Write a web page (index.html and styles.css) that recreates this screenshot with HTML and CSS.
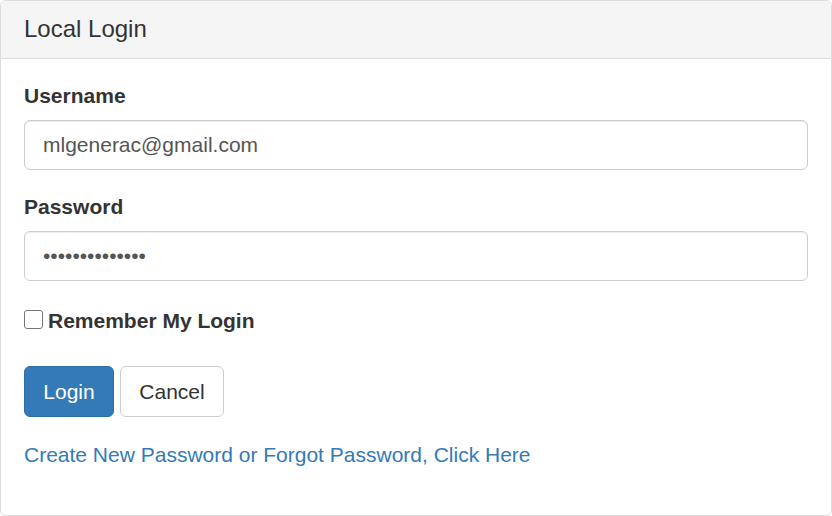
FILE: index.html
```html
<!DOCTYPE html>
<html>
<head>
<meta charset="utf-8">
<link rel="stylesheet" href="styles.css">
</head>
<body>
<div class="panel">
  <div class="panel-heading">Local Login</div>
  <div class="panel-body">
    <div class="form-group">
      <label class="label" for="u">Username</label>
      <input class="input" id="u" type="text" value="mlgenerac@gmail.com">
    </div>
    <div class="form-group">
      <label class="label" for="p">Password</label>
      <input class="input" id="p" type="password" value="abcdefghijklmn">
    </div>
    <div class="check-row">
      <input class="check" id="r" type="checkbox">
      <label class="check-label" for="r">Remember My Login</label>
    </div>
    <div class="buttons">
      <button class="btn btn-primary">Login</button>
      <button class="btn btn-default">Cancel</button>
    </div>
    <a class="link" href="#">Create New Password or Forgot Password, Click Here</a>
  </div>
</div>
</body>
</html>
```
FILE: styles.css
```css
* { box-sizing: border-box; }
html, body { margin: 0; padding: 0; background: #fff; }
body {
  font-family: "Liberation Sans", Arial, sans-serif;
  font-size: 21px;
  line-height: 30px;
  color: #333;
}
.panel {
  width: 832px;
  height: 516px;
  border: 1px solid #ddd;
  border-radius: 6px;
  overflow: hidden;
}
.panel-heading {
  height: 58px;
  background: #f5f5f5;
  border-bottom: 1px solid #ddd;
  padding: 0 23px;
  font-size: 24px;
  line-height: 56px;
  color: #333;
}
.panel-body {
  padding: 22px 23px 0;
  display: flex;
  flex-direction: column;
  align-items: flex-start;
}
.form-group {
  display: flex;
  flex-direction: column;
  width: 100%;
  margin-bottom: 22px;
}
.label {
  font-weight: bold;
  margin-bottom: 9px;
}
.input {
  width: 100%;
  height: 50px;
  padding: 9px 18px;
  font-family: inherit;
  font-size: 21px;
  color: #555;
  background: #fff;
  border: 1px solid #ccc;
  border-radius: 6px;
  box-shadow: inset 0 1px 1px rgba(0,0,0,.075);
  outline: none;
}
.check-row {
  display: flex;
  align-items: center;
  gap: 5px;
  height: 30px;
  margin-top: 3px;
}
.check {
  appearance: none;
  -webkit-appearance: none;
  width: 19px;
  height: 19px;
  margin: 0 0 4px;
  border: 1px solid #767676;
  border-radius: 3px;
  background: #fff;
}
.check-label {
  font-weight: bold;
}
.buttons {
  display: flex;
  gap: 6px;
  margin-top: 30px;
}
.btn {
  height: 51px;
  padding: 0 18px;
  font-family: inherit;
  font-size: 21px;
  line-height: 49px;
  border-radius: 6px;
  border: 1px solid;
  cursor: pointer;
}
.btn-primary {
  width: 90px;
  background: #337ab7;
  border-color: #2e6da4;
  color: #fff;
}
.btn-default {
  width: 104px;
  background: #fff;
  border-color: #ccc;
  color: #333;
}
.link {
  margin-top: 23px;
  color: #337ab7;
  text-decoration: none;
}
```
